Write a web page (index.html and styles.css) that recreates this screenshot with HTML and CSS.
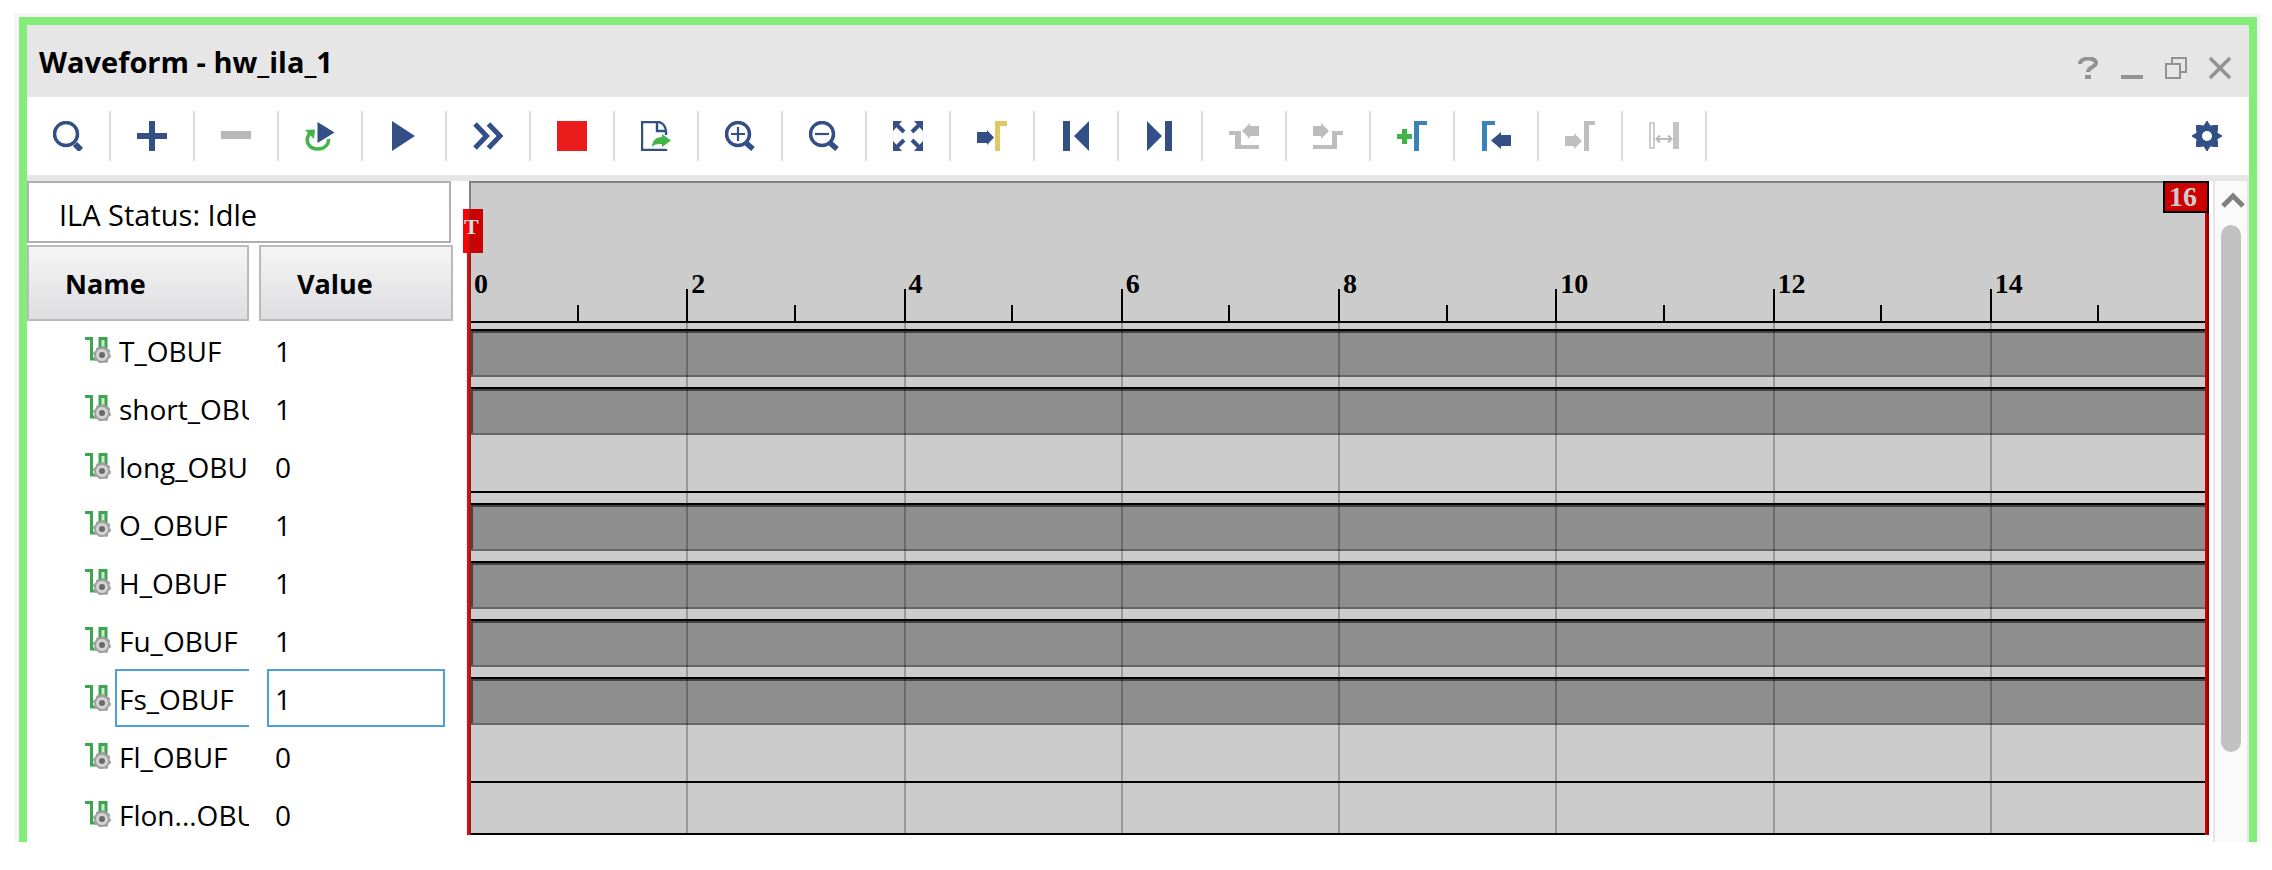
FILE: index.html
```html
<!DOCTYPE html>
<html lang="en">
<head>
<meta charset="utf-8">
<title>Waveform - hw_ila_1</title>
<link rel="stylesheet" href="styles.css">
</head>
<body>
<svg class="defs" aria-hidden="true">
  <symbol id="signal" viewBox="0 0 26 26">
    <path d="M15 2H21V14H15Z" fill="#cfe8cf"/>
    <path d="M0 1.500H6.500V22H11M15 13V1.500H21V12" fill="none" stroke="#3da550" stroke-width="3"/>
    <circle cx="17" cy="18" r="7" fill="#d4d4d4" stroke="#a0a0a0" stroke-width="2"/>
    <circle cx="17" cy="18" r="8" fill="none" stroke="#a0a0a0" stroke-width="2" stroke-dasharray="3 3.280"/>
    <circle cx="17" cy="18" r="3" fill="#6a6a6a"/>
  </symbol>
</svg>
<main class="frame">
  <header class="titlebar">
    <h1 class="title">Waveform - hw_ila_1</h1>
    <div class="window-controls">
      <button class="window-button" aria-label="Help"><svg viewBox="0 0 22 22"><path d="M3 7C3 0 19 0 19 6C19 10 11 10 11 15" fill="none" stroke="#929292" stroke-width="4"/><path d="M8 18H14V22H8Z" fill="#929292"/></svg></button>
      <button class="window-button" aria-label="Minimize"><svg viewBox="0 0 22 22"><path d="M0 18H22V22H0Z" fill="#929292"/></svg></button>
      <button class="window-button" aria-label="Restore"><svg viewBox="0 0 22 22"><path d="M7 7V1H21V15H15M1 7H15V21H1Z" fill="none" stroke="#929292" stroke-width="2"/></svg></button>
      <button class="window-button" aria-label="Close"><svg viewBox="0 0 22 22"><path d="M1 1L21 21M21 1L1 21" stroke="#929292" stroke-width="3.500"/></svg></button>
    </div>
  </header>
  <nav class="toolbar" aria-label="Waveform tools">
    <button class="tool" aria-label="Search"><svg viewBox="0 0 30 30"><circle cx="13" cy="13" r="11.500" fill="none" stroke="#334f85" stroke-width="3.500"/><path d="M22 23L28 29" stroke="#334f85" stroke-width="6"/></svg></button>
    <button class="tool" aria-label="Add"><svg viewBox="0 0 30 30"><path d="M12 0H18V12H30V18H18V30H12V18H0V12H12Z" fill="#334f85"/></svg></button>
    <button class="tool" aria-label="Remove"><svg viewBox="0 0 30 30"><path d="M0 10H30V18H0Z" fill="#b9b9b9"/></svg></button>
    <button class="tool" aria-label="Run trigger again"><svg viewBox="0 0 30 30"><path d="M5.500 11C-2 21 5 28 13 28C20 28 24 23 23.500 18" fill="none" stroke="#41b549" stroke-width="3.500"/><path d="M0 9L10 8.500L9 18Z" fill="#41b549"/><path d="M12.500 1L29.500 11.500L12.500 22Z" fill="#334f85"/></svg></button>
    <button class="tool" aria-label="Run trigger"><svg viewBox="0 0 30 30"><path d="M3 0L26 15L3 30Z" fill="#334f85"/></svg></button>
    <button class="tool" aria-label="Run immediate"><svg viewBox="0 0 30 30"><path d="M2 3L13.500 15L2 27M15.500 3L27 15L15.500 27" fill="none" stroke="#334f85" stroke-width="5"/></svg></button>
    <button class="tool" aria-label="Stop"><svg viewBox="0 0 30 30"><path d="M0 0H30V30H0Z" fill="#ed1c1c"/></svg></button>
    <button class="tool" aria-label="Export"><svg viewBox="0 0 30 30"><path d="M25 28V29H1V1H18C22 2 25 6 25 11V14M16 2V10H24" fill="none" stroke="#334f85" stroke-width="2.400"/><path d="M11 26C11 20 15 16 21 16V13L30 19.500L21 26V23C16 23 14 23 11 26Z" fill="#41b549"/></svg></button>
    <button class="tool" aria-label="Zoom in"><svg viewBox="0 0 30 30"><circle cx="13" cy="13" r="11.500" fill="none" stroke="#334f85" stroke-width="3.500"/><path d="M6 13H20M13 6V20" stroke="#334f85" stroke-width="2.200"/><path d="M20 21L28 28" stroke="#334f85" stroke-width="5.500"/></svg></button>
    <button class="tool" aria-label="Zoom out"><svg viewBox="0 0 30 30"><circle cx="13" cy="13" r="11.500" fill="none" stroke="#334f85" stroke-width="3.500"/><path d="M6 13H20" stroke="#334f85" stroke-width="2.200"/><path d="M20 21L28 28" stroke="#334f85" stroke-width="5.500"/></svg></button>
    <button class="tool" aria-label="Zoom fit"><svg viewBox="0 0 30 30"><path d="M0 0H9L0 10ZM30 0V10L21 0ZM0 30V20L9 30ZM30 30H21L30 20Z" fill="#334f85"/><path d="M3 3L11 11M27 3L19 11M3 27L11 19M27 27L19 19" stroke="#334f85" stroke-width="4"/></svg></button>
    <button class="tool" aria-label="Go to cursor"><svg viewBox="0 0 30 30"><path d="M0 11H10V9L17 16.500L10 24V22H0Z" fill="#334f85"/><path d="M18 0H30V5H23V30H18Z" fill="#e0c865"/></svg></button>
    <button class="tool" aria-label="Go to first sample"><svg viewBox="0 0 30 30"><path d="M2 0H9V30H2ZM28 0V30L13 15Z" fill="#334f85"/></svg></button>
    <button class="tool" aria-label="Go to last sample"><svg viewBox="0 0 30 30"><path d="M20 0H27V30H20ZM2 0V30L17 15Z" fill="#334f85"/></svg></button>
    <button class="tool" aria-label="Previous transition"><svg viewBox="0 0 30 30"><path d="M0 10H12V24H30V28H6V14H0ZM30 5V15H21V18L13 10L21 2V5Z" fill="#bdbdbd"/></svg></button>
    <button class="tool" aria-label="Next transition"><svg viewBox="0 0 30 30"><path d="M30 10H19V24H0V28H24V14H30ZM0 5V15H8V18L16 10L8 2V5Z" fill="#bdbdbd"/></svg></button>
    <button class="tool" aria-label="Add marker"><svg viewBox="0 0 30 30"><path d="M5 8H10V13H15V18H10V23H5V18H0V13H5Z" fill="#41b549"/><path d="M17 0H30V4H22V30H17Z" fill="#3a83b7"/></svg></button>
    <button class="tool" aria-label="Previous marker"><svg viewBox="0 0 30 30"><path d="M1 0H14V4H6V30H1Z" fill="#3a83b7"/><path d="M30 14V25H20V28L10 19.500L20 11V14Z" fill="#334f85"/></svg></button>
    <button class="tool" aria-label="Next marker"><svg viewBox="0 0 30 30"><path d="M0 15V25H9V28L17 20L9 12V15ZM19 0H30V4H24V30H19Z" fill="#bfbfbf"/></svg></button>
    <button class="tool" aria-label="Swap cursors"><svg viewBox="0 0 30 30"><path d="M1 2H5V27H1Z" fill="none" stroke="#c0c0c0" stroke-width="1.600"/><path d="M24 1H30V28H24Z" fill="#c3c3c3"/><path d="M8 18H22M11 14.500L7.500 18L11 21.500M19 14.500L22.500 18L19 21.500" fill="none" stroke="#b8b8b8" stroke-width="2"/></svg></button>
    <button class="tool tool-settings" aria-label="Settings"><svg viewBox="0 0 30 30"><path d="M12 5L15 0L18 5ZM12 25L15 30L18 25ZM5 12L0 15L5 18ZM25 12L30 15L25 18Z" fill="#334f85" stroke="#334f85"/><path d="M4 4H9L15 6L21 4H26V9L24 15L26 21V26H21L15 24L9 26H4V21L6 15L4 9Z" fill="#334f85"/><circle cx="15" cy="15" r="11" fill="#334f85"/><circle cx="15" cy="15" r="5" fill="#fff"/></svg></button>
  </nav>
  <div class="workspace">
    <section class="signals">
      <p class="status">ILA Status: Idle</p>
      <table class="signal-table">
        <colgroup><col class="col-name"><col class="col-value"></colgroup>
        <thead><tr><th scope="col"><div class="head head-name">Name</div></th><th scope="col"><div class="head">Value</div></th></tr></thead>
        <tbody>
          <tr><td><div class="name"><svg class="signal-icon"><use href="#signal"/></svg><span class="label">T_OBUF</span></div></td><td><div class="value">1</div></td></tr>
          <tr><td><div class="name"><svg class="signal-icon"><use href="#signal"/></svg><span class="label">short_OBUF</span></div></td><td><div class="value">1</div></td></tr>
          <tr><td><div class="name"><svg class="signal-icon"><use href="#signal"/></svg><span class="label">long_OBUF</span></div></td><td><div class="value">0</div></td></tr>
          <tr><td><div class="name"><svg class="signal-icon"><use href="#signal"/></svg><span class="label">O_OBUF</span></div></td><td><div class="value">1</div></td></tr>
          <tr><td><div class="name"><svg class="signal-icon"><use href="#signal"/></svg><span class="label">H_OBUF</span></div></td><td><div class="value">1</div></td></tr>
          <tr><td><div class="name"><svg class="signal-icon"><use href="#signal"/></svg><span class="label">Fu_OBUF</span></div></td><td><div class="value">1</div></td></tr>
          <tr class="selected"><td><div class="name"><svg class="signal-icon"><use href="#signal"/></svg><span class="label">Fs_OBUF</span></div></td><td><div class="value">1</div></td></tr>
          <tr><td><div class="name"><svg class="signal-icon"><use href="#signal"/></svg><span class="label">Fl_OBUF</span></div></td><td><div class="value">0</div></td></tr>
          <tr><td><div class="name"><svg class="signal-icon"><use href="#signal"/></svg><span class="label">Flon...OBUF</span></div></td><td><div class="value">0</div></td></tr>
        </tbody>
      </table>
    </section>
    <section class="wave" aria-label="Waveform">
      <div class="ruler">
        <div class="tick">0</div><div class="tick">2</div><div class="tick">4</div><div class="tick">6</div><div class="tick">8</div><div class="tick">10</div><div class="tick">12</div><div class="tick">14</div>
      </div>
      <div class="tracks">
        <div class="track high"></div>
        <div class="track high"></div>
        <div class="track low"></div>
        <div class="track high"></div>
        <div class="track high"></div>
        <div class="track high"></div>
        <div class="track high"></div>
        <div class="track low"></div>
        <div class="track low"></div>
        <div class="grid"><i></i><i></i><i></i><i></i><i></i><i></i><i></i><i></i></div>
      </div>
      <div class="trigger-line"></div>
      <div class="trigger-flag">T</div>
      <div class="cursor-line"></div>
      <div class="cursor-flag">16</div>
    </section>
    <div class="scrollbar">
      <button class="scroll-up" aria-label="Scroll up"><svg viewBox="0 0 24 16"><path d="M2 14L12 4L22 14" fill="none" stroke="#808080" stroke-width="5"/></svg></button>
      <div class="thumb"></div>
    </div>
  </div>
</main>
</body>
</html>
```
FILE: styles.css
```css
* { box-sizing: border-box; }

body {
  margin: 0;
  padding: 17px 15px 28px 19px;
  height: 100vh;
  background: #fff;
  color: #000;
  font-family: "Open Sans", "Noto Sans", sans-serif;
  font-size: 28px;
  line-height: 38px;
}

button {
  margin: 0;
  padding: 0;
  border: 0;
  background: none;
  display: flex;
  align-items: center;
  justify-content: center;
}

.defs { position: absolute; width: 0; height: 0; }

.frame {
  height: 100%;
  display: flex;
  flex-direction: column;
  overflow: hidden;
  border: solid #82ee79;
  border-width: 8px 8px 0;
  outline: 5px solid #f6f6f6;
  clip-path: inset(-4px -4px 0 -5px);
}

.titlebar {
  flex: none;
  height: 72px;
  padding: 0 18px 0 12px;
  display: flex;
  align-items: center;
  justify-content: space-between;
  background: #e6e6e6;
}
.title { margin: 0; padding-top: 2px; font-size: 29px; font-weight: 700; }
.window-controls { display: flex; gap: 22px; padding-top: 14px; }
.window-button, .window-button svg { width: 22px; height: 22px; }

.toolbar {
  flex: none;
  height: 84px;
  display: flex;
  align-items: center;
  border-bottom: 6px solid #e6e6e6;
}
.tool { width: 84px; height: 50px; border-right: 2px solid #dcdcdc; }
.tool svg { width: 30px; height: 30px; }
.tool-settings { margin-left: auto; border-right: 0; }

.workspace { flex: 1; min-height: 0; display: flex; }

.signals { flex: none; width: 426px; margin-right: 16px; }
.status {
  margin: 0 2px 2px 0;
  height: 62px;
  padding: 13px 30px;
  border: 2px solid #b0b0b0;
  font-size: 29px;
}

.signal-table {
  width: 100%;
  table-layout: fixed;
  border-collapse: collapse;
}
.col-name { width: 232px; }
.signal-table th, .signal-table td { padding: 0; text-align: left; }
.head {
  height: 76px;
  padding: 18px 36px;
  border: 2px solid #bababa;
  background: linear-gradient(#f5f5f5, #dedee1);
  font-size: 27px;
  font-weight: 700;
}
.head-name { margin-right: 10px; }

.name {
  height: 58px;
  margin-right: 10px;
  padding-left: 58px;
  display: flex;
  overflow: hidden;
}
.signal-icon { flex: none; width: 26px; height: 26px; margin: 16px 4px 0 0; }
.label {
  flex: none;
  min-width: 140px;
  border: 2px solid transparent;
  padding: 9px 2px;
}
.value {
  height: 58px;
  margin: 0 8px;
  padding: 9px 6px;
  border: 2px solid transparent;
}
.selected .label, .selected .value { border-color: #4c9fdc; }

.wave {
  position: relative;
  flex: 1;
  display: flex;
  flex-direction: column;
  margin: 0 4px 7px 0;
  border: solid #808080;
  border-width: 2px 0 0 2px;
  border-bottom: 2px solid #000;
  background: #ccc;
}

.ruler {
  flex: none;
  height: 140px;
  margin: 0 2px 0 -2px;
  padding-top: 86px;
  display: grid;
  grid-template-columns: repeat(8, 1fr);
  border-bottom: 2px solid #000;
  font: 700 28px/30px "Liberation Serif", serif;
}
.tick {
  padding-left: 5px;
  background:
    linear-gradient(#000, #000) left bottom / 2px 32px no-repeat,
    linear-gradient(#000, #000) 50% bottom / 2px 16px no-repeat;
}

.tracks {
  position: relative;
  flex: 1;
  min-height: 0;
  overflow: hidden;
  padding-top: 6px;
  margin: 0 2px 0 -2px;
}
.track { height: 48px; margin: 0 0 10px 2px; }
.high {
  border-top: 2px solid #000;
  border-bottom: 2px solid #666;
  background: #8e8e8e;
  box-shadow: inset 2px 2px #444;
}
.low { border-bottom: 2px solid #000; }
.grid {
  position: absolute;
  inset: 0;
  display: grid;
  grid-template-columns: repeat(8, 1fr);
}
.grid i { border-left: 2px solid rgba(0, 0, 0, .25); }

.trigger-line {
  position: absolute;
  top: 26px;
  bottom: -2px;
  left: -4px;
  width: 4px;
  background: linear-gradient(90deg, #f00 50%, #8c2626 50%);
}
.trigger-flag {
  position: absolute;
  top: 26px;
  left: -8px;
  width: 20px;
  height: 44px;
  padding-left: 1px;
  background: linear-gradient(90deg, #f00 30%, #8c2626 30% 40%, #c00 40%);
  color: #e0e0e0;
  font: 700 22px/36px "Liberation Serif", serif;
}
.cursor-line {
  position: absolute;
  top: 0;
  bottom: -2px;
  right: 0;
  width: 4px;
  background: linear-gradient(90deg, #c00 50%, #980000 50%);
}
.cursor-flag {
  position: absolute;
  top: -2px;
  right: 0;
  width: 46px;
  height: 32px;
  border: 2px solid #000;
  background: #c00;
  color: #ccc;
  padding-left: 4px;
  font: 700 28px/28px "Liberation Serif", serif;
}

.scrollbar {
  flex: none;
  width: 36px;
  padding: 11px 6px 0;
  border: solid #e6e6e6;
  border-width: 0 2px;
  background: #fafafa;
}
.scroll-up, .scroll-up svg { width: 24px; height: 16px; }
.thumb {
  width: 20px;
  height: 81%;
  margin-top: 17px;
  border-radius: 10px;
  background: #c1c1c1;
}
```
